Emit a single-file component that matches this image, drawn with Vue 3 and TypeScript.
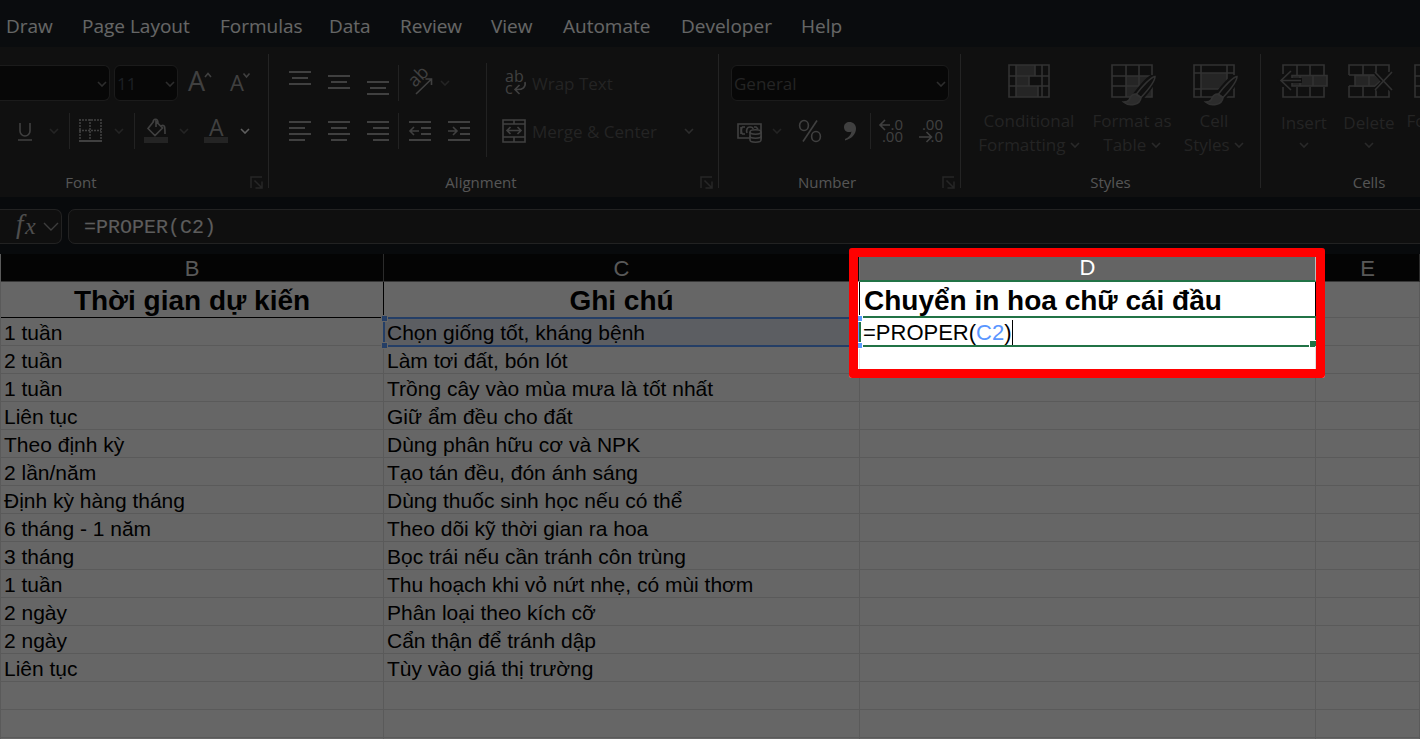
<script setup lang="ts">
import { ref } from 'vue'

interface Row {
  duration: string
  note: string
}

const tabs: string[] = [
  'Draw', 'Page Layout', 'Formulas', 'Data', 'Review', 'View', 'Automate', 'Developer', 'Help',
]

const rows: Row[] = [
  { duration: '2 tuần', note: 'Làm tơi đất, bón lót' },
  { duration: '1 tuần', note: 'Trồng cây vào mùa mưa là tốt nhất' },
  { duration: 'Liên tục', note: 'Giữ ẩm đều cho đất' },
  { duration: 'Theo định kỳ', note: 'Dùng phân hữu cơ và NPK' },
  { duration: '2 lần/năm', note: 'Tạo tán đều, đón ánh sáng' },
  { duration: 'Định kỳ hàng tháng', note: 'Dùng thuốc sinh học nếu có thể' },
  { duration: '6 tháng - 1 năm', note: 'Theo dõi kỹ thời gian ra hoa' },
  { duration: '3 tháng', note: 'Bọc trái nếu cần tránh côn trùng' },
  { duration: '1 tuần', note: 'Thu hoạch khi vỏ nứt nhẹ, có mùi thơm' },
  { duration: '2 ngày', note: 'Phân loại theo kích cỡ' },
  { duration: '2 ngày', note: 'Cẩn thận để tránh dập' },
  { duration: 'Liên tục', note: 'Tùy vào giá thị trường' },
  { duration: '', note: '' },
  { duration: '', note: '' },
  { duration: '', note: '' },
]

const formula = ref('=PROPER(C2)')
</script>

<template>
  <div class="app">
    <svg class="defs" aria-hidden="true">
      <symbol id="chev" viewBox="0 0 10 6"><path d="M1 1l4 4 4-4" fill="none" stroke="currentColor" stroke-width="1.6" /></symbol>
      <symbol id="launch" viewBox="0 0 13 13"><path d="M1 12V1h11M4.500 4.500l7 7M12 5.500V12H5.500" fill="none" stroke="currentColor" stroke-width="1.500" /></symbol>
      <symbol id="brush" viewBox="0 0 36 32">
        <path d="M34 1c-4 0-13 10-19 18l5 4C27 15 34 6 34 1z" fill="#282828" stroke="#282828" stroke-width="5" />
        <path d="M34 1.500c-4 .5-13 10-18.500 17.500l4.500 3.500C27 15 34 6 34 1.500z" fill="#282828" stroke="currentColor" stroke-width="1.500" />
        <path d="M14.500 19c-5 0-5 4-6.500 6-1 1.500-3 2-5.500 2 5 4.500 17 3.500 17.500-4.500z" fill="#6e6e6e" stroke="currentColor" stroke-width="1.500" />
      </symbol>
    </svg>

    <nav class="tabs" aria-label="Ribbon tabs">
      <button v-for="t in tabs" :key="t" type="button">{{ t }}</button>
    </nav>

    <div class="ribbon">
      <section class="group font-group">
        <div class="line">
          <span class="pick family">
            <select aria-label="Font name"><option></option></select>
            <svg class="chev"><use href="#chev" /></svg>
          </span>
          <span class="pick size">
            <select aria-label="Font size"><option>11</option></select>
            <svg class="chev"><use href="#chev" /></svg>
          </span>
          <button type="button" class="w40" aria-label="Increase font size">
            <svg width="24" height="24" viewBox="0 0 24 24" class="glyph">
              <text x="0" y="20" font-size="27">A</text>
              <path d="M17 6l3-3.500L23 6" />
            </svg>
          </button>
          <button type="button" class="w40" aria-label="Decrease font size">
            <svg width="24" height="24" viewBox="0 0 24 24" class="glyph">
              <text x="2" y="20" font-size="22">A</text>
              <path d="M15.500 2.500l3 3.500 3-3.500" />
            </svg>
          </button>
        </div>
        <div class="line marks">
          <button type="button" aria-label="Underline">
            <svg width="16" height="24" viewBox="0 0 16 24" class="glyph"><path d="M3 4v8a4.800 4.800 0 0 0 10 0V4M1 21h14" /></svg>
          </button>
          <button type="button" aria-label="Underline options"><svg class="chev off"><use href="#chev" /></svg></button>
          <i class="bar"></i>
          <button type="button" aria-label="Borders">
            <svg width="24" height="24" viewBox="0 0 24 24" class="glyph">
              <path d="M0 1h22M0 11.500h22" stroke-dasharray="2 1" />
              <path d="M1 0v21M11 0v21M22 0v21" stroke-dasharray="2 1" />
              <path d="M0 22h23" stroke-width="2" />
            </svg>
          </button>
          <button type="button" aria-label="Border options"><svg class="chev off"><use href="#chev" /></svg></button>
          <i class="bar"></i>
          <button type="button" aria-label="Fill color">
            <svg width="24" height="26" viewBox="0 0 24 26" class="glyph">
              <path d="M10 3L4 10.500l7 7L18.500 10 12 3.500V9M9 5c0-5 5-5 5 0M17 8c4-2 4 1 4 8" />
              <path d="M0 19h24v6H0z" class="solid" />
            </svg>
          </button>
          <button type="button" aria-label="Fill options"><svg class="chev off"><use href="#chev" /></svg></button>
          <button type="button" aria-label="Font color">
            <svg width="24" height="26" viewBox="0 0 24 26" class="glyph">
              <text x="5" y="18" font-size="23">A</text>
              <path d="M0 19h24v6H0z" class="solid" />
            </svg>
          </button>
          <button type="button" aria-label="Font color options"><svg class="chev on"><use href="#chev" /></svg></button>
        </div>
        <footer>
          <span>Font</span>
          <button type="button" class="launch" aria-label="Font settings"><svg width="13" height="13"><use href="#launch" /></svg></button>
        </footer>
      </section>
      <i class="rule"></i>

      <section class="group align-group">
        <div class="split">
          <div class="stack">
            <div class="line">
              <button type="button" class="w39" aria-label="Top align"><svg width="22" height="24" class="lines"><path d="M0 1h22M3 7h16M0 13h22" /></svg></button>
              <button type="button" class="w39" aria-label="Middle align"><svg width="22" height="24" class="lines"><path d="M0 5h22M3 11h16M0 17h22" /></svg></button>
              <button type="button" class="w39" aria-label="Bottom align"><svg width="22" height="24" class="lines"><path d="M0 11h22M3 17h16M0 23h22" /></svg></button>
              <i class="bar"></i>
              <button type="button" class="w39" aria-label="Orientation">
                <svg width="26" height="26" viewBox="0 0 26 26" class="glyph">
                  <text x="0" y="0" font-size="18" transform="translate(8 18) rotate(-45)">ab</text>
                  <path d="M9 24L24 9.500M18.500 9H24.500V15" />
                </svg>
              </button>
              <button type="button" class="w12" aria-label="Orientation options"><svg class="chev off"><use href="#chev" /></svg></button>
            </div>
            <div class="line">
              <button type="button" class="w39" aria-label="Align left"><svg width="22" height="20" class="lines"><path d="M0 1h22M0 7h16M0 13h22M0 19h16" /></svg></button>
              <button type="button" class="w39" aria-label="Center"><svg width="22" height="20" class="lines"><path d="M0 1h22M3 7h16M0 13h22M3 19h16" /></svg></button>
              <button type="button" class="w39" aria-label="Align right"><svg width="22" height="20" class="lines"><path d="M0 1h22M6 7h16M0 13h22M6 19h16" /></svg></button>
              <i class="bar"></i>
              <button type="button" class="w39" aria-label="Decrease indent"><svg width="22" height="20" class="lines"><path d="M0 1h22M12 7h10M12 13h10M0 19h22" /><path class="thin" d="M1 10h9M5 6l-4 4 4 4" /></svg></button>
              <button type="button" class="w39" aria-label="Increase indent"><svg width="22" height="20" class="lines"><path d="M0 1h22M12 7h10M12 13h10M0 19h22" /><path class="thin" d="M0 10h9M5 6l4 4-4 4" /></svg></button>
            </div>
          </div>
          <i class="tall"></i>
          <div class="stack wide">
            <button type="button" class="text-btn">
              <svg width="24" height="26" viewBox="0 0 24 26" class="glyph">
                <text x="3" y="12" font-size="16">ab</text>
                <text x="3" y="24" font-size="16">c</text>
                <path d="M23 12c1 5-2 8-9 7.500M17.500 15L13 19.500l4.500 4.500" />
              </svg>
              <span>Wrap Text</span>
            </button>
            <button type="button" class="text-btn">
              <svg width="24" height="24" viewBox="0 0 24 24" class="glyph">
                <path d="M1 1h22v22H1zM1 5h22M1 18h22M12 1v4M12 18v5M5 11.500h14M8.500 8L5 11.500 8.500 15M15.500 8l3.500 3.500-3.500 3.500" />
              </svg>
              <span>Merge &amp; Center</span>
              <svg class="chev end"><use href="#chev" /></svg>
            </button>
          </div>
        </div>
        <footer>
          <span>Alignment</span>
          <button type="button" class="launch" aria-label="Alignment settings"><svg width="13" height="13"><use href="#launch" /></svg></button>
        </footer>
      </section>
      <i class="rule"></i>

      <section class="group number-group">
        <div class="line">
          <span class="pick format">
            <select aria-label="Number format"><option>General</option></select>
            <svg class="chev"><use href="#chev" /></svg>
          </span>
        </div>
        <div class="line figures">
          <button type="button" aria-label="Accounting format">
            <svg width="26" height="24" viewBox="0 0 26 24" class="glyph">
              <path d="M2 5h23V19H2zM9 8H6.500C5 9 5 14 6.500 15H9M5 8v7M18 8h2l2 2M11 14c-1-3 0-6 3-6s3 1 3 2" />
              <path d="M14 13v8c0 3 11 3 11 0v-8" fill="#282828" />
              <ellipse cx="19.500" cy="13" rx="5.500" ry="2.200" fill="#282828" />
              <path d="M14 17c0 3 11 3 11 0" />
            </svg>
          </button>
          <button type="button" aria-label="Accounting options"><svg class="chev off"><use href="#chev" /></svg></button>
          <button type="button" aria-label="Percent style">
            <svg width="24" height="24" viewBox="0 0 24 24" class="glyph"><ellipse cx="6" cy="6.500" rx="4.400" ry="5" /><ellipse cx="18" cy="17.500" rx="4.400" ry="5" /><path d="M19 1.500L5 22.500" /></svg>
          </button>
          <button type="button" aria-label="Comma style">
            <svg width="14" height="22" viewBox="0 0 14 22" class="comma"><path d="M6.500 2C3.500 2 1 4 1 7s2 5 5 5c1 0 2 0 2.500-.5C8 15 5.500 17.500 2 19v1.500c6-1.500 11-6 11-12C13 4.500 10 2 6.500 2z" /></svg>
          </button>
          <i class="bar"></i>
          <button type="button" aria-label="Increase decimal">
            <svg width="24" height="26" viewBox="0 0 24 26" class="glyph">
              <text x="24" y="12" font-size="15" text-anchor="end">.0</text><text x="24" y="24" font-size="15" text-anchor="end">.00</text>
              <path d="M11 7H1M6 2L1 7l5 5" />
            </svg>
          </button>
          <button type="button" aria-label="Decrease decimal">
            <svg width="24" height="26" viewBox="0 0 24 26" class="glyph">
              <text x="24" y="12" font-size="15" text-anchor="end">.00</text><text x="24" y="24" font-size="15" text-anchor="end">.0</text>
              <path d="M0 19h12M7.500 14l5 5-5 5" />
            </svg>
          </button>
        </div>
        <footer>
          <span>Number</span>
          <button type="button" class="launch" aria-label="Number settings"><svg width="13" height="13"><use href="#launch" /></svg></button>
        </footer>
      </section>
      <i class="rule"></i>

      <section class="group styles-group">
        <div class="bigs">
          <button type="button" class="big">
            <svg width="42" height="34" viewBox="0 0 42 34" class="grid-icon">
              <path class="fill" d="M8 1h19v11h-6v10h9v11H8z" />
              <path d="M1 1h40v32H1zM8 1v32M34 1v32M1 12h40M1 22h40M27 1v11M21 12v10M30 22v11" />
            </svg>
            <span>Conditional<br />Formatting <svg class="chev"><use href="#chev" /></svg></span>
          </button>
          <button type="button" class="big">
            <svg width="42" height="34" viewBox="0 0 42 34" class="grid-icon">
              <path class="fill" d="M15 12h26v21H15z" />
              <path d="M1 1h40v32H1zM15 1v32M28 1v32M1 12h40M1 22h40" />
              <use href="#brush" x="10" y="11" width="36" height="32" />
            </svg>
            <span>Format as<br />Table <svg class="chev"><use href="#chev" /></svg></span>
          </button>
          <button type="button" class="big">
            <svg width="42" height="34" viewBox="0 0 42 34" class="grid-icon">
              <path class="fill" d="M8 9h26v16H8z" />
              <path d="M1 1h40v32H1zM8 1v32M34 1v32M1 9h40M1 25h40" />
              <use href="#brush" x="10" y="11" width="36" height="32" />
            </svg>
            <span>Cell<br />Styles <svg class="chev"><use href="#chev" /></svg></span>
          </button>
        </div>
        <footer><span>Styles</span></footer>
      </section>
      <i class="rule"></i>

      <section class="group cells-group">
        <div class="bigs">
          <button type="button" class="big low">
            <svg width="48" height="34" viewBox="0 0 48 34" class="grid-icon">
              <path d="M3 10V1h41v10M3 23v10h41V23M17 1v10M30 1v10M17 23v10M30 23v10" />
              <path class="fill edge" d="M12 11.500h35v10.500H12zM20 12v10M33 12v10" />
              <path d="M22 16.500H1M11 7L1 16.500 11 26" stroke="#282828" stroke-width="5" />
              <path d="M21 16.500H1M11 7L1 16.500 11 26" />
            </svg>
            <span>Insert<br /><svg class="chev"><use href="#chev" /></svg></span>
          </button>
          <button type="button" class="big low">
            <svg width="42" height="34" viewBox="0 0 42 34" class="grid-icon">
              <path d="M1 11V1h40v7M1 11h26M1 22h26M1 22v11h40v-7M15 1v10M28 1v8M15 22v11M28 25v8" />
              <path class="fill edge" d="M7 11.500h20l6 5-6 5.500H7zM21 12v10" />
              <path d="M28 9l16 17M44 9L28 26" stroke="#282828" stroke-width="5" />
              <path d="M27 8l17 18M44 8L27 26" />
            </svg>
            <span>Delete<br /><svg class="chev"><use href="#chev" /></svg></span>
          </button>
          <button type="button" class="big">
            <svg width="42" height="34" viewBox="0 0 42 34" class="grid-icon">
              <path d="M1 1h40v32H1zM14 1v32M28 1v32M1 12h40M1 22h40" />
            </svg>
            <span>Format<br /><svg class="chev"><use href="#chev" /></svg></span>
          </button>
        </div>
        <footer><span>Cells</span></footer>
      </section>
    </div>

    <div class="formula-strip">
      <button type="button" class="fx" aria-label="Insert function">
        <svg width="22" height="26" viewBox="0 0 22 26"><text x="1" y="19" font-size="27">f</text><text x="10" y="20" font-size="24">x</text></svg>
        <svg width="16" height="9" viewBox="0 0 16 9" class="fx-chev"><path d="M1 1l7 7 7-7" /></svg>
      </button>
      <input v-model="formula" type="text" aria-label="Formula bar" spellcheck="false" />
    </div>

    <table class="sheet">
      <colgroup><col class="col-b" /><col class="col-c" /><col class="col-d" /><col /></colgroup>
      <thead>
        <tr>
          <th scope="col">B</th>
          <th scope="col">C</th>
          <th scope="col" class="active">D<div class="spotlight"></div></th>
          <th scope="col">E</th>
        </tr>
      </thead>
      <tbody>
        <tr class="titles">
          <td>Thời gian dự kiến</td>
          <td>Ghi chú</td>
          <td class="start">Chuyển in hoa chữ cái đầu</td>
          <td class="plain"></td>
        </tr>
        <tr>
          <td>1 tuần</td>
          <td class="source">
            Chọn giống tốt, kháng bệnh
            <div class="outline"><i class="tl"></i><i class="bl"></i><i class="tr"></i><i class="br"></i></div>
          </td>
          <td class="editing">
            <div class="frame"></div>
            <span class="entry" role="textbox" aria-label="D2" contenteditable="true" spellcheck="false">=PROPER(<span class="refname">C2</span>)</span>
          </td>
          <td></td>
        </tr>
        <tr v-for="(r, i) in rows" :key="i">
          <td>{{ r.duration }}</td>
          <td>{{ r.note }}</td>
          <td></td>
          <td></td>
        </tr>
      </tbody>
    </table>
  </div>
</template>

<style>
html,
body {
  background: #666;
}
</style>

<style scoped>
.app {
  position: relative;
  height: 100vh;
  overflow: hidden;
  background: #fff;
  font-family: "Open Sans", "Noto Sans", sans-serif;
  color: #fff;
}
.app * {
  box-sizing: border-box;
}
.defs {
  position: absolute;
  width: 0;
  height: 0;
}
button {
  display: flex;
  align-items: center;
  justify-content: center;
  padding: 0;
  border: 0;
  background: none;
  color: inherit;
  font: inherit;
  white-space: nowrap;
}
svg {
  flex: none;
  overflow: visible;
}

/* Tabs */
.tabs {
  display: grid;
  grid-template-columns: 76px 138px 109px 71px 91px 72px 118px 120px auto;
  justify-content: start;
  height: 47px;
  padding: 5px 0 0 6px;
  background: #191f24;
  font-size: 19px;
}
.tabs button {
  justify-content: flex-start;
}

/* Ribbon */
.ribbon {
  display: flex;
  height: 150px;
  overflow: hidden;
  background: #282828;
  color: #a0a0a0;
}
.group {
  display: flex;
  flex-direction: column;
  flex: none;
  gap: 12px;
  padding-top: 18px;
}
.rule {
  flex: none;
  width: 1px;
  margin: 7px 0 9px;
  background: #5a5a5a;
}
.font-group { width: 268px; }
.align-group { width: 449px; }
.number-group { width: 241px; }
.styles-group { width: 299px; }
.cells-group { width: 216px; }
.line {
  display: flex;
  align-items: center;
  height: 36px;
}
.w40 { width: 40px; }
.w39 { width: 39px; }
.w12 { width: 12px; }
.bar {
  width: 1px;
  height: 36px;
  margin: 0 1px;
  justify-self: center;
  background: #555;
}
.chev {
  width: 10px;
  height: 6px;
  color: #707070;
}
.chev.off { color: #5a5a5a; }
.chev.on { color: #eee; }
.glyph {
  fill: none;
  stroke: currentColor;
  stroke-width: 1.6;
}
.glyph text {
  fill: currentColor;
  stroke: none;
}
.glyph .solid {
  fill: #5a5a5a;
  stroke: none;
}
.lines {
  fill: none;
  stroke: currentColor;
  stroke-width: 2;
}
.lines .thin { stroke-width: 1.6; }
.comma { fill: currentColor; }

.pick {
  position: relative;
  display: block;
}
.pick select {
  width: 100%;
  height: 36px;
  padding: 0 2px;
  appearance: none;
  border: 1px solid #444;
  border-radius: 6px;
  background: #121212;
  color: #5a5a5a;
  font: inherit;
  font-size: 17px;
}
.pick .chev {
  position: absolute;
  top: 16px;
  right: 3px;
}
.family { width: 110px; }
.family select {
  border-left: 0;
  border-radius: 0 6px 6px 0;
}
.size {
  width: 64px;
  margin: 0 2px 0 4px;
}
.size select { color: #46505c; }
.format {
  width: 218px;
  margin-left: 12px;
}
.marks {
  display: grid;
  grid-template-columns: 38px 20px 10px 33px 24px 6px 38px 18px 46px 12px;
  padding-left: 6px;
}
.figures {
  display: grid;
  grid-template-columns: 46px 10px 56px 23px 18px 24px 55px;
  padding-left: 7px;
}

footer {
  position: relative;
  display: flex;
  justify-content: center;
  height: 20px;
  margin-top: 11px;
  color: #d4d4d4;
  font-size: 15px;
  line-height: 20px;
}
.font-group footer { padding-right: 106px; }
.align-group footer { padding-right: 25px; }
.number-group footer { padding-right: 25px; }
.launch {
  position: absolute;
  right: 5px;
  top: 4px;
  color: #606060;
}

.split {
  display: flex;
  height: 84px;
}
.stack {
  display: flex;
  flex-direction: column;
  gap: 12px;
  width: 209px;
  padding-left: 11px;
}
.stack.wide {
  flex: 1;
  width: auto;
  padding-left: 15px;
}
.tall {
  width: 1px;
  height: 94px;
  margin: -2px 0 0 8px;
  background: #555;
}
.text-btn {
  justify-content: flex-start;
  height: 36px;
  gap: 6px;
  color: #a0a0a0;
  font-size: 17px;
}
.text-btn span { color: #5a5a5a; }
.text-btn .end { margin: 0 24px 0 auto; }

.bigs {
  display: grid;
  grid-template-columns: 106px 100px 64px;
  height: 84px;
  margin-top: -1px;
  padding-left: 15px;
  margin-bottom: 1px;
}
.cells-group .bigs {
  grid-template-columns: 66px 64px 68px;
  padding-left: 10px;
}
.big {
  flex-direction: column;
  justify-content: flex-start;
  gap: 11px;
  height: 94px;
  color: #5a5a5a;
  font-size: 17px;
  line-height: 24px;
}
.big.low { gap: 13px; }
.big span .chev { vertical-align: 3px; color: #686868; }
.big.low span .chev { vertical-align: 5px; }
.grid-icon {
  fill: none;
  stroke: #7c7c7c;
  stroke-width: 1.6;
  color: #7c7c7c;
}
.grid-icon .fill {
  fill: #5c5c5c;
  stroke: none;
}
.grid-icon .edge { stroke: #7c7c7c; }

/* Formula bar */
.formula-strip {
  display: flex;
  gap: 6px;
  height: 57px;
  padding: 12px 0 10px;
  overflow: hidden;
  background: #161a20;
}
.fx {
  width: 62px;
  gap: 6px;
  padding-left: 12px;
  border: 1px solid #555;
  border-left: 0;
  border-radius: 0 7px 7px 0;
  background: #262626;
}
.fx text {
  fill: #c4c4c4;
  font-family: "Liberation Serif", serif;
  font-style: italic;
}
.fx-chev {
  fill: none;
  stroke: #999;
  stroke-width: 1.4;
}
.formula-strip input {
  flex: 1;
  min-width: 0;
  margin-right: -8px;
  padding: 2px 15px 0;
  border: 1px solid #555;
  border-radius: 7px;
  background: #262626;
  color: #e6e6e6;
  font: 20px "Liberation Mono", monospace;
}

/* Sheet */
.sheet {
  width: 100%;
  border-left: 1px solid #e0e0e0;
  border-spacing: 0;
  table-layout: fixed;
  background: #fff;
  color: #000;
  font-family: "Liberation Sans", Arial, sans-serif;
  font-size: 22px;
}
.col-b { width: 383px; }
.col-c { width: 476px; }
.col-d { width: 456px; }
th {
  position: relative;
  height: 28px;
  padding: 2px 0 0;
  border-right: 1px solid #6c6c6c;
  border-bottom: 1px solid #8a8a8a;
  background: #0a0a0a;
  color: #ddd;
  font-weight: 400;
  line-height: 25px;
}
th.active {
  border-right-color: #bbb;
  border-bottom: 2px solid #217346;
  background: #646464;
  color: #fff;
  line-height: 24px;
}
td {
  position: relative;
  height: 28px;
  padding: 2px 3px 0;
  border-right: 1px solid #e0e0e0;
  border-bottom: 1px solid #e0e0e0;
  font-size: 21px;
  line-height: 25px;
  white-space: nowrap;
}
.titles td {
  height: 36px;
  padding: 3px 4px 0;
  border-color: #000;
  font-size: 28px;
  font-weight: 700;
  line-height: 32px;
  text-align: center;
}
.titles .start { text-align: left; }
.titles .plain { border-color: #e0e0e0; }
.source { background: #e6ebf6; }
.outline {
  position: absolute;
  inset: -1px -1px -2px;
  border: 2px solid #5a9cff;
}
.outline i {
  position: absolute;
  z-index: 2;
  width: 7px;
  height: 7px;
  border: 1px solid #fff;
  background: #5a9cff;
}
.outline .tl { top: -4px; left: -4px; }
.outline .bl { bottom: -4px; left: -4px; }
.outline .tr { top: -4px; right: -5px; }
.outline .br { bottom: -4px; right: -5px; }
.frame {
  position: absolute;
  inset: -2px -1px -2px;
  border: 2px solid #217346;
  border-right-width: 1px;
}
.frame::after {
  content: "";
  position: absolute;
  right: -2px;
  bottom: -3px;
  width: 6px;
  height: 6px;
  border: 1px solid #fff;
  background: #217346;
}
.entry {
  position: relative;
  display: inline-block;
  border-right: 1px solid #000;
  font-size: 22px;
  line-height: 25px;
  vertical-align: top;
}
.refname { color: #5a96ff; }

/* Highlight box: everything outside it is dimmed */
.spotlight {
  position: absolute;
  z-index: 10;
  top: -6px;
  left: -11px;
  right: -10px;
  height: 130px;
  border: 9px solid #f00;
  border-radius: 3px;
  box-shadow: 0 0 0 200vmax rgba(0, 0, 0, 0.6);
  pointer-events: none;
}
</style>
